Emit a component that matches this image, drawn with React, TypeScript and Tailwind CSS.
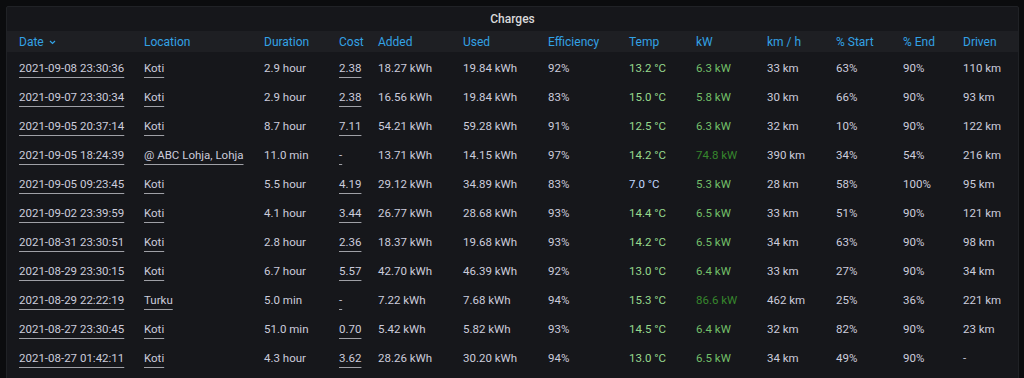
const rows = [
  ["2021-09-08 23:30:36", "Koti", "2.9 hour", "2.38", "18.27 kWh", "19.84 kWh", "92%", "13.2 °C", "6.3 kW", "33 km", "63%", "90%", "110 km"],
  ["2021-09-07 23:30:34", "Koti", "2.9 hour", "2.38", "16.56 kWh", "19.84 kWh", "83%", "15.0 °C", "5.8 kW", "30 km", "66%", "90%", "93 km"],
  ["2021-09-05 20:37:14", "Koti", "8.7 hour", "7.11", "54.21 kWh", "59.28 kWh", "91%", "12.5 °C", "6.3 kW", "32 km", "10%", "90%", "122 km"],
  ["2021-09-05 18:24:39", "@ ABC Lohja, Lohja", "11.0 min", "-", "13.71 kWh", "14.15 kWh", "97%", "14.2 °C", "74.8 kW", "390 km", "34%", "54%", "216 km"],
  ["2021-09-05 09:23:45", "Koti", "5.5 hour", "4.19", "29.12 kWh", "34.89 kWh", "83%", "7.0 °C", "5.3 kW", "28 km", "58%", "100%", "95 km"],
  ["2021-09-02 23:39:59", "Koti", "4.1 hour", "3.44", "26.77 kWh", "28.68 kWh", "93%", "14.4 °C", "6.5 kW", "33 km", "51%", "90%", "121 km"],
  ["2021-08-31 23:30:51", "Koti", "2.8 hour", "2.36", "18.37 kWh", "19.68 kWh", "93%", "14.2 °C", "6.5 kW", "34 km", "63%", "90%", "98 km"],
  ["2021-08-29 23:30:15", "Koti", "6.7 hour", "5.57", "42.70 kWh", "46.39 kWh", "92%", "13.0 °C", "6.4 kW", "33 km", "27%", "90%", "34 km"],
  ["2021-08-29 22:22:19", "Turku", "5.0 min", "-", "7.22 kWh", "7.68 kWh", "94%", "15.3 °C", "86.6 kW", "462 km", "25%", "36%", "221 km"],
  ["2021-08-27 23:30:45", "Koti", "51.0 min", "0.70", "5.42 kWh", "5.82 kWh", "93%", "14.5 °C", "6.4 kW", "32 km", "82%", "90%", "23 km"],
  ["2021-08-27 01:42:11", "Koti", "4.3 hour", "3.62", "28.26 kWh", "30.20 kWh", "94%", "13.0 °C", "6.5 kW", "34 km", "49%", "90%", "-"],
];

const headers = ["Date", "Location", "Duration", "Cost", "Added", "Used", "Efficiency", "Temp", "kW", "km / h", "% Start", "% End", "Driven"];

const cols = "grid grid-cols-[125px_120px_75px_39px_85px_85px_81px_67px_71px_69px_67px_60px_1fr]";

function tempColor(t: string) {
  return parseFloat(t) < 10 ? "text-[#c0d8ff]" : "text-[#96d98d]";
}

function kwColor(k: string) {
  return parseFloat(k) > 50 ? "text-[#37872d]" : "text-[#73bf69]";
}

const link = "underline decoration-[#9fa0a6] underline-offset-[5px]";

export default function App() {
  return (
    <div className="h-[378px] w-[1024px] overflow-hidden bg-[#0b0c0e] pl-[6px] pt-[6px] font-['Roboto',sans-serif] text-[11.5px]">
      <div className="h-[380px] w-[1013px] rounded-[2px] border border-[#202226] bg-[#16171b]">
        <div className="flex h-[24px] items-center justify-center text-[12px] font-medium text-[#d8d9da]">
          Charges
        </div>
        <div className={`${cols} h-[21px] items-center bg-[#1e1f23] pl-[12px] pt-[1px] text-[12px] text-[#33a2e5]`}>
          {headers.map((h, i) => (
            <div key={h} className="flex items-center">
              {h}
              {i === 0 && (
                <svg className="ml-[5px] mt-[1px]" width="7" height="5" viewBox="0 0 7 5" fill="none">
                  <path d="M1 1l2.5 2.5L6 1" stroke="#33a2e5" strokeWidth="1.2" />
                </svg>
              )}
            </div>
          ))}
        </div>
        <div className="pt-[2px]">
          {rows.map((r) => (
            <div key={r[0]} className={`${cols} h-[29px] items-center pl-[12px] text-[#ccccdc]`}>
              <div><span className={link}>{r[0]}</span></div>
              <div><span className={link}>{r[1]}</span></div>
              <div>{r[2]}</div>
              <div><span className={link}>{r[3]}</span></div>
              <div>{r[4]}</div>
              <div>{r[5]}</div>
              <div>{r[6]}</div>
              <div className={tempColor(r[7])}>{r[7]}</div>
              <div className={kwColor(r[8])}>{r[8]}</div>
              <div>{r[9]}</div>
              <div>{r[10]}</div>
              <div>{r[11]}</div>
              <div>{r[12]}</div>
            </div>
          ))}
        </div>
      </div>
    </div>
  );
}
